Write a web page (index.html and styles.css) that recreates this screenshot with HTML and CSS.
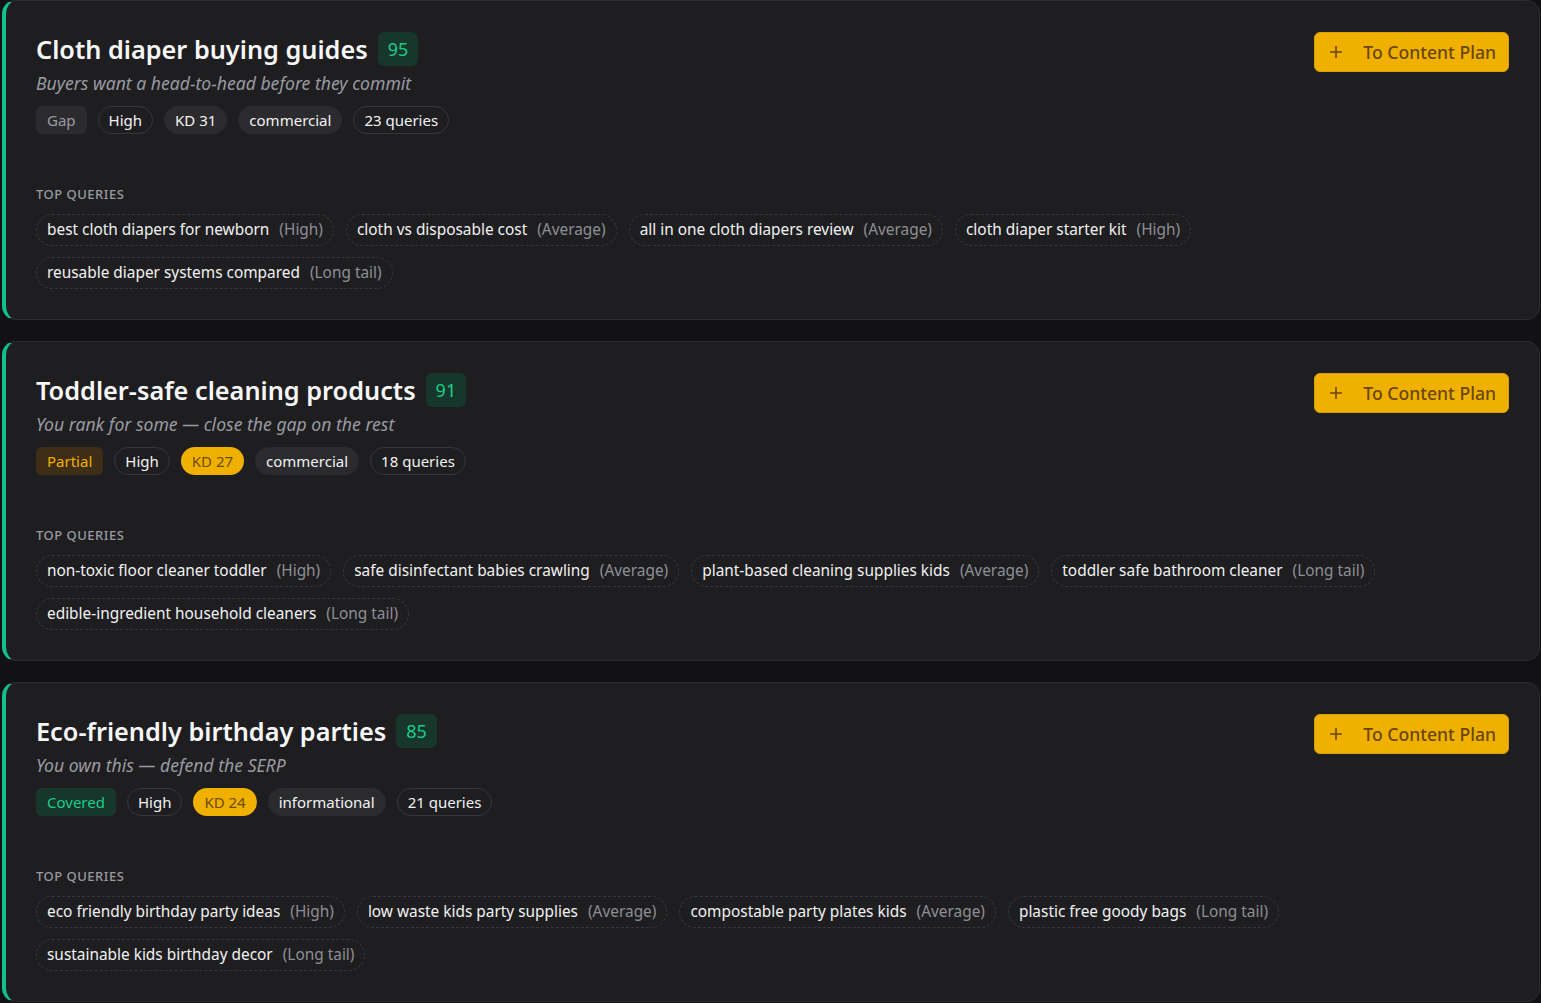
FILE: index.html
```html
<!DOCTYPE html>
<html lang="en">

<head>
    <meta charset="UTF-8">
    <meta name="viewport" content="width=device-width, initial-scale=1.0">
    <title>Topic clusters</title>
    <link rel="stylesheet" href="styles.css">
</head>

<body>
    <div class="cluster-list">

        <div class="cluster">
            <div class="cluster-head">
                <div class="cluster-info">
                    <div class="title-row">
                        <h2 class="title">Cloth diaper buying guides</h2>
                        <span class="score">95</span>
                    </div>
                    <p class="subtitle">Buyers want a head-to-head before they commit</p>
                    <div class="tags">
                        <span class="tag status gap">Gap</span>
                        <span class="tag outline">High</span>
                        <span class="tag filled">KD 31</span>
                        <span class="tag filled">commercial</span>
                        <span class="tag outline">23 queries</span>
                    </div>
                </div>
                <button class="plan-btn">
                    <svg width="16" height="16" viewBox="0 0 16 16"><path d="M8 2v12M2 8h12" stroke="currentColor" stroke-width="1.6" fill="none"/></svg>
                    To Content Plan
                </button>
            </div>
            <div class="queries">
                <div class="queries-label">Top queries</div>
                <div class="query-list">
                    <span class="query">best cloth diapers for newborn <em>(High)</em></span>
                    <span class="query">cloth vs disposable cost <em>(Average)</em></span>
                    <span class="query">all in one cloth diapers review <em>(Average)</em></span>
                    <span class="query">cloth diaper starter kit <em>(High)</em></span>
                    <span class="query">reusable diaper systems compared <em>(Long tail)</em></span>
                </div>
            </div>
        </div>

        <div class="cluster">
            <div class="cluster-head">
                <div class="cluster-info">
                    <div class="title-row">
                        <h2 class="title">Toddler-safe cleaning products</h2>
                        <span class="score">91</span>
                    </div>
                    <p class="subtitle">You rank for some — close the gap on the rest</p>
                    <div class="tags">
                        <span class="tag status partial">Partial</span>
                        <span class="tag outline">High</span>
                        <span class="tag kd-warn">KD 27</span>
                        <span class="tag filled">commercial</span>
                        <span class="tag outline">18 queries</span>
                    </div>
                </div>
                <button class="plan-btn">
                    <svg width="16" height="16" viewBox="0 0 16 16"><path d="M8 2v12M2 8h12" stroke="currentColor" stroke-width="1.6" fill="none"/></svg>
                    To Content Plan
                </button>
            </div>
            <div class="queries">
                <div class="queries-label">Top queries</div>
                <div class="query-list">
                    <span class="query">non-toxic floor cleaner toddler <em>(High)</em></span>
                    <span class="query">safe disinfectant babies crawling <em>(Average)</em></span>
                    <span class="query">plant-based cleaning supplies kids <em>(Average)</em></span>
                    <span class="query">toddler safe bathroom cleaner <em>(Long tail)</em></span>
                    <span class="query">edible-ingredient household cleaners <em>(Long tail)</em></span>
                </div>
            </div>
        </div>

        <div class="cluster">
            <div class="cluster-head">
                <div class="cluster-info">
                    <div class="title-row">
                        <h2 class="title">Eco-friendly birthday parties</h2>
                        <span class="score">85</span>
                    </div>
                    <p class="subtitle">You own this — defend the SERP</p>
                    <div class="tags">
                        <span class="tag status covered">Covered</span>
                        <span class="tag outline">High</span>
                        <span class="tag kd-warn">KD 24</span>
                        <span class="tag filled">informational</span>
                        <span class="tag outline">21 queries</span>
                    </div>
                </div>
                <button class="plan-btn">
                    <svg width="16" height="16" viewBox="0 0 16 16"><path d="M8 2v12M2 8h12" stroke="currentColor" stroke-width="1.6" fill="none"/></svg>
                    To Content Plan
                </button>
            </div>
            <div class="queries">
                <div class="queries-label">Top queries</div>
                <div class="query-list">
                    <span class="query">eco friendly birthday party ideas <em>(High)</em></span>
                    <span class="query">low waste kids party supplies <em>(Average)</em></span>
                    <span class="query">compostable party plates kids <em>(Average)</em></span>
                    <span class="query">plastic free goody bags <em>(Long tail)</em></span>
                    <span class="query">sustainable kids birthday decor <em>(Long tail)</em></span>
                </div>
            </div>
        </div>

    </div>
</body>

</html>
```

FILE: styles.css
```css
body {
    margin: 0;
    background-color: #121214;
    font-family: "Noto Sans", "Open Sans", sans-serif;
    color: #f2f2f3;
    overflow: hidden;
}

.cluster-list {
    display: flex;
    flex-direction: column;
    gap: 21px;
    padding: 0 1px 0 2px;
}

.cluster {
    background: #1e1e20;
    border: 1px solid #2c2c30;
    border-left: 4px solid #14c08a;
    border-radius: 14px;
    padding: 30px 30px 29px 30px;
    height: 320px;
    box-sizing: border-box;
}

.cluster-head {
    display: flex;
    justify-content: space-between;
    align-items: flex-start;
}

.title-row {
    display: flex;
    align-items: center;
    gap: 10px;
}

.title {
    margin: 0;
    font-size: 25.3px;
    font-weight: 600;
    line-height: 36px;
    color: #f7f7f8;
}

.score {
    background: #17362c;
    color: #1ccb8d;
    font-size: 18px;
    border-radius: 6px;
    padding: 0 10px;
    line-height: 34px;
}

.subtitle {
    margin: 3px 0 0;
    font-size: 17.6px;
    font-style: italic;
    line-height: 26px;
    color: #9a9aa1;
}

.tags {
    display: flex;
    gap: 11px;
    margin-top: 10px;
}

.tag {
    font-size: 15px;
    line-height: 26px;
    padding: 0 10px;
    border-radius: 14px;
    border: 1px solid transparent;
    color: #f2f2f3;
}

.tag.outline {
    border-color: #37373b;
}

.tag.filled {
    background: #2b2b2e;
}

.tag.kd-warn {
    background: #f0b000;
    color: #6e4d05;
}

.tag.status {
    border-radius: 6px;
}

.tag.gap {
    background: #2b2b2e;
    color: #9a9aa1;
}

.tag.partial {
    background: #3e2e18;
    color: #f0b000;
}

.tag.covered {
    background: #17362c;
    color: #1ccb8d;
}

.plan-btn {
    display: flex;
    align-items: center;
    gap: 19px;
    margin-top: 1px;
    height: 40px;
    padding: 0 12px 0 13px;
    background: #f0b000;
    color: #6a4704;
    border: 1px solid #d99f00;
    border-radius: 6px;
    font-family: inherit;
    font-size: 17.6px;
    font-weight: 500;
    cursor: pointer;
}

.queries {
    margin-top: 51px;
}

.queries-label {
    font-size: 13px;
    font-weight: 500;
    letter-spacing: 0.5px;
    text-transform: uppercase;
    color: #9a9aa1;
    line-height: 18px;
}

.query-list {
    display: flex;
    flex-wrap: wrap;
    gap: 11px 12px;
    margin-top: 11px;
}

.query {
    font-size: 15.4px;
    line-height: 30px;
    padding: 0 10px;
    border: 1px dashed #38383c;
    border-radius: 16px;
    color: #f2f2f3;
}

.query em {
    font-style: normal;
    color: #8e8e96;
    margin-left: 6px;
}
```
